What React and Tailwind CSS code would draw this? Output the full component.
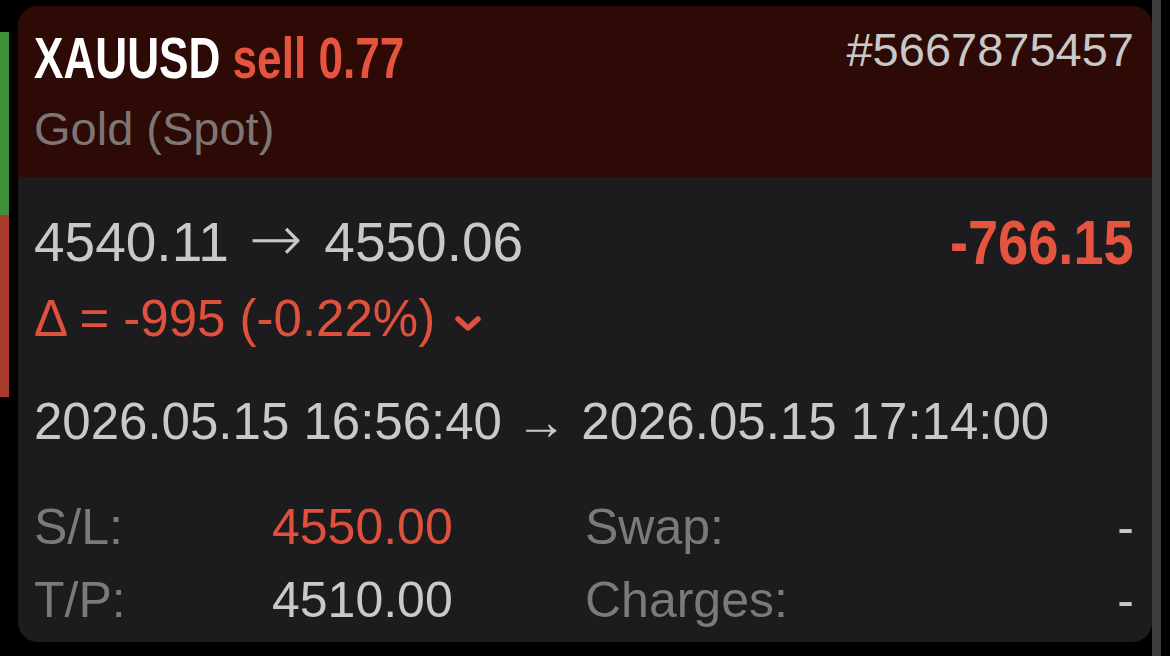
export default function App() {
  return (
    <div className="w-[1170px] h-[656px] bg-black flex font-['Liberation_Sans',Arial,sans-serif] overflow-hidden">
      <div className="w-[9px] pt-[32px] flex flex-col shrink-0">
        <div className="h-[183px] bg-[#3f8f3b]" />
        <div className="h-[182px] bg-[#a93a2e]" />
      </div>
      <div className="w-[9px] shrink-0" />
      <div className="w-[1134px] h-[636px] mt-[6px] rounded-[20px] overflow-hidden bg-[#1c1c1e] shrink-0 flex flex-col">
        <div className="h-[171px] bg-[#2d0a05] pl-[16px] pr-[18px] pt-[16px] flex justify-between items-start">
          <div className="flex flex-col">
            <div className="h-[60px] mt-[6px] whitespace-nowrap">
              <span className="inline-block origin-left scale-x-[0.774] font-bold text-[57px] leading-[60px]">
                <span className="text-white">XAUUSD</span>{" "}
                <span className="text-[#e4543f]">sell 0.77</span>
              </span>
            </div>
            <div className="text-[47px] leading-[56px] mt-[13px] text-[#7d7674]">Gold (Spot)</div>
          </div>
          <div className="text-[47px] leading-[56px] text-[#c8c8c8]">#5667875457</div>
        </div>
        <div className="pl-[16px] pr-[18px] pt-[31px] flex flex-col">
          <div className="flex justify-between items-start">
            <div className="text-[55px] leading-[62px] text-[#c9c9c9] whitespace-nowrap">
              4540.11<span className="font-['DejaVu_Sans',sans-serif] font-extralight text-[64px] leading-[62px] ml-[20px] mr-[22px]">→</span>4550.06
            </div>
            <div className="mt-[3px] h-[62px] whitespace-nowrap">
              <span className="inline-block origin-right scale-x-[0.86] font-bold text-[63px] leading-[62px] text-[#e4543f]">-766.15</span>
            </div>
          </div>
          <div className="mt-[16px] flex items-center text-[51px] leading-[60px] text-[#e0513d]">
            <span>Δ = -995 (-0.22%)</span>
            <svg className="ml-[19px] mt-[10px]" width="28" height="18" viewBox="0 0 28 18">
              <polyline points="4,4 14,13 24,4" fill="none" stroke="#e0513d" strokeWidth="5.5" strokeLinecap="round" strokeLinejoin="round" />
            </svg>
          </div>
          <div className="mt-[43px] text-[51px] leading-[60px] text-[#c9c9c9] whitespace-nowrap">
            2026.05.15 16:56:40 → 2026.05.15 17:14:00
          </div>
          <div className="mt-[45px] grid grid-cols-[238px_313px_1fr_auto] gap-y-[13px] text-[50px] leading-[60px]">
            <div className="text-[#7a7a7a]">S/L:</div>
            <div className="text-[#e0513d]">4550.00</div>
            <div className="text-[#7a7a7a]">Swap:</div>
            <div className="text-[#c8c8c8] text-right">-</div>
            <div className="text-[#7a7a7a]">T/P:</div>
            <div className="text-[#c9c9c9]">4510.00</div>
            <div className="text-[#7a7a7a]">Charges:</div>
            <div className="text-[#c8c8c8] text-right">-</div>
          </div>
        </div>
      </div>
      <div className="w-[9px] h-full bg-[#3d3d3d] shrink-0" />
    </div>
  );
}
